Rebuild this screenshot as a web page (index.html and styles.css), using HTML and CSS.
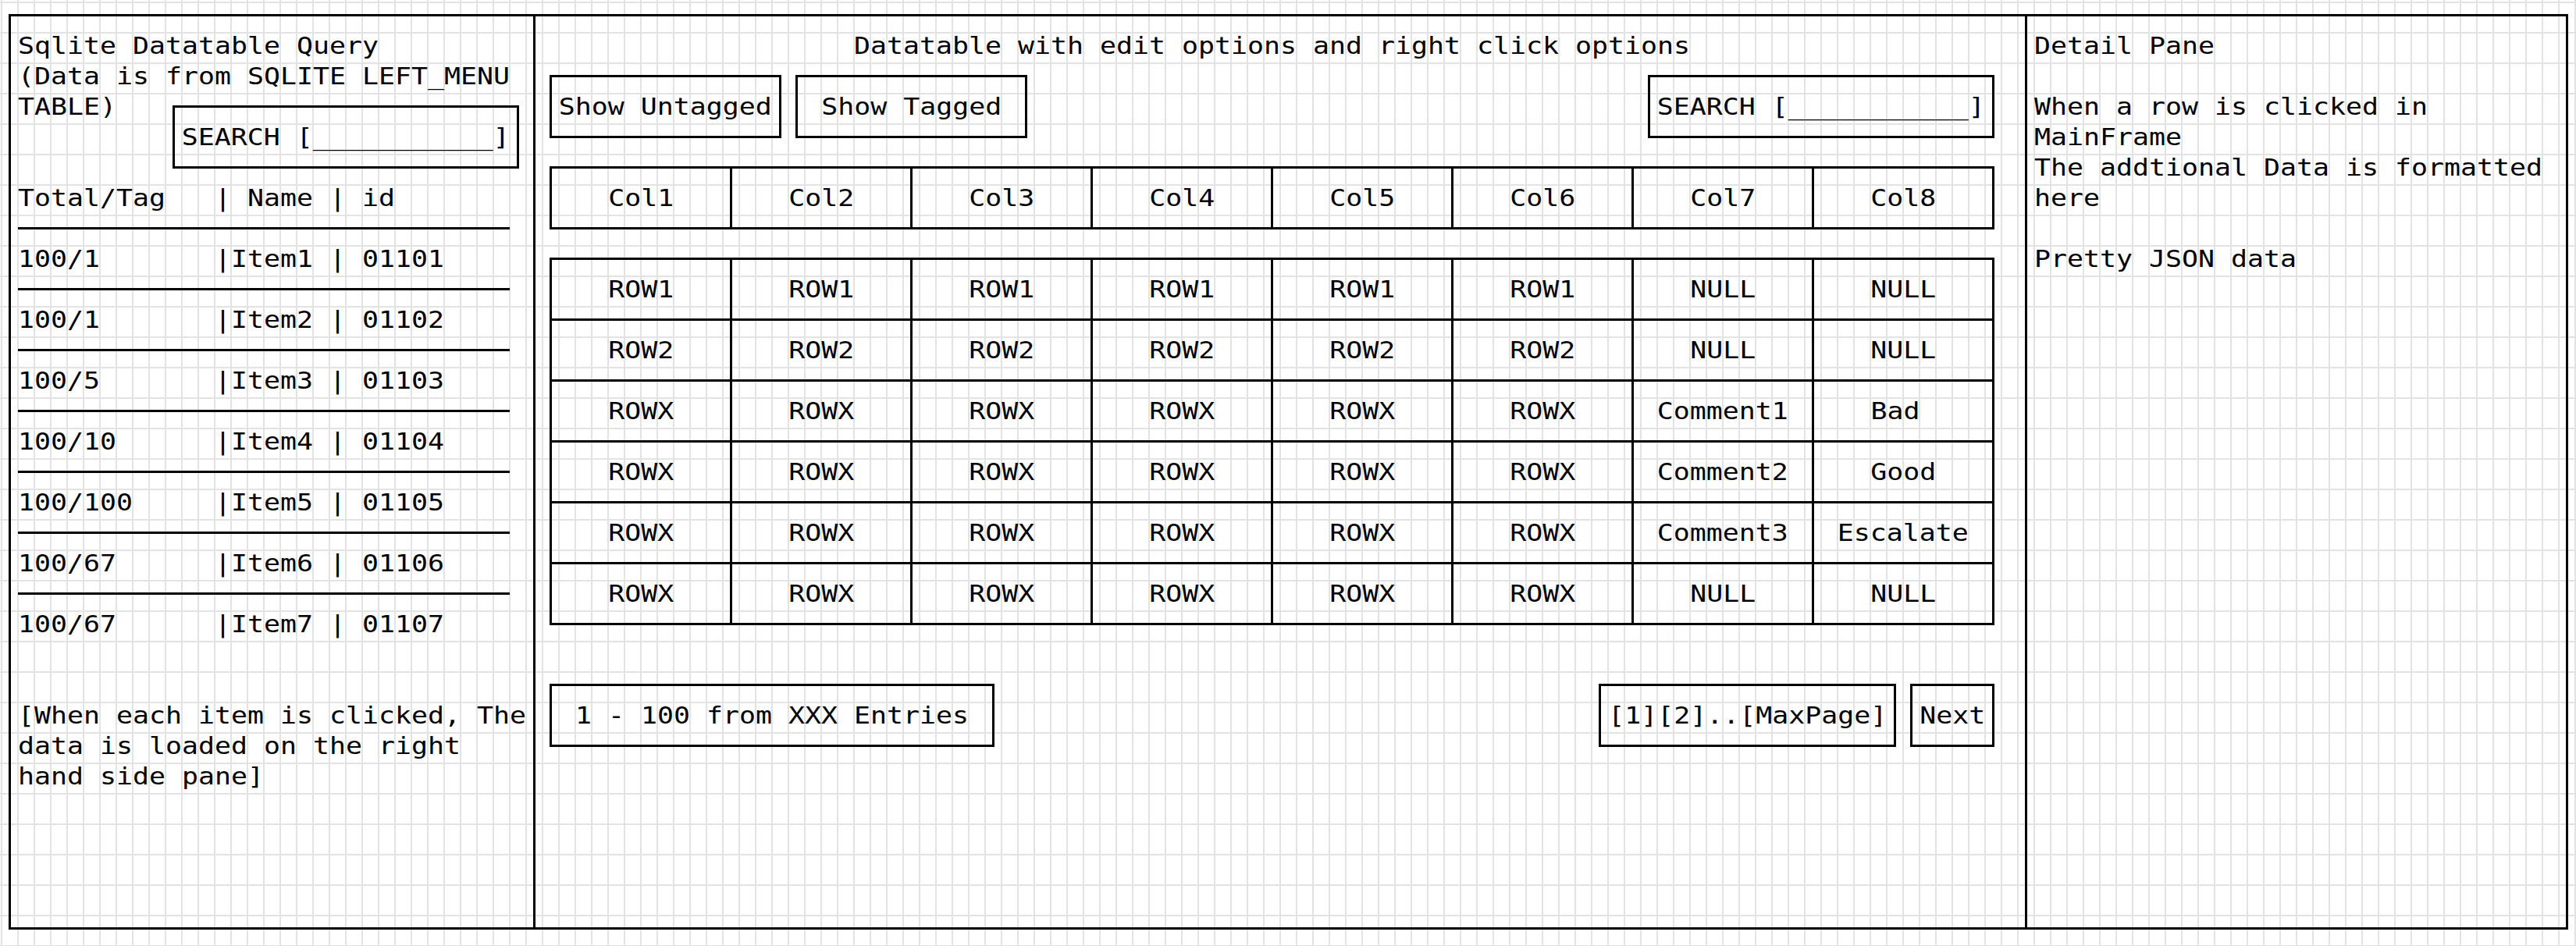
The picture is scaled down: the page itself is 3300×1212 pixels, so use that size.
FILE: index.html
```html
<!DOCTYPE html>
<html lang="en">
<head>
    <meta charset="UTF-8">
    <meta name="viewport" content="width=device-width, initial-scale=1.0">
    <title>Sqlite Datatable Query - Mockup</title>
    <link rel="stylesheet" href="styles.css">
</head>
<body>
    <div class="canvas">
        <div class="frame">

            <!-- Left menu pane -->
            <aside class="pane left-pane">
                <div class="line">Sqlite Datatable Query</div>
                <div class="line">(Data is from SQLITE LEFT_MENU</div>
                <div class="menu-head">
                    <div class="line">TABLE)</div>
                    <div class="box box-search menu-search"><span>SEARCH [___________]</span></div>
                </div>
                <div class="line">Total/Tag   | Name | id</div>
                <div class="rule"></div>
                <div class="line">100/1       |Item1 | 01101</div>
                <div class="rule"></div>
                <div class="line">100/1       |Item2 | 01102</div>
                <div class="rule"></div>
                <div class="line">100/5       |Item3 | 01103</div>
                <div class="rule"></div>
                <div class="line">100/10      |Item4 | 01104</div>
                <div class="rule"></div>
                <div class="line">100/100     |Item5 | 01105</div>
                <div class="rule"></div>
                <div class="line">100/67      |Item6 | 01106</div>
                <div class="rule"></div>
                <div class="line">100/67      |Item7 | 01107</div>

                <div class="note">
                    <div class="line">[When each item is clicked, The</div>
                    <div class="line">data is loaded on the right</div>
                    <div class="line">hand side pane]</div>
                </div>
            </aside>

            <!-- Main datatable -->
            <main class="pane table-pane">
                <div class="title">Datatable with edit options and right click options</div>

                <div class="toolbar">
                    <div class="box box-btn"><span>Show Untagged</span></div>
                    <div class="box box-btn"><span>Show Tagged</span></div>
                    <div class="box box-search push-right"><span>SEARCH [___________]</span></div>
                </div>

                <div class="grid-table">
                    <div class="cell"><span>Col1</span></div>
                    <div class="cell"><span>Col2</span></div>
                    <div class="cell"><span>Col3</span></div>
                    <div class="cell"><span>Col4</span></div>
                    <div class="cell"><span>Col5</span></div>
                    <div class="cell"><span>Col6</span></div>
                    <div class="cell"><span>Col7</span></div>
                    <div class="cell"><span>Col8</span></div>
                </div>

                <div class="grid-table">
                    <div class="cell"><span>ROW1</span></div>
                    <div class="cell"><span>ROW1</span></div>
                    <div class="cell"><span>ROW1</span></div>
                    <div class="cell"><span>ROW1</span></div>
                    <div class="cell"><span>ROW1</span></div>
                    <div class="cell"><span>ROW1</span></div>
                    <div class="cell"><span>NULL</span></div>
                    <div class="cell"><span>NULL</span></div>

                    <div class="cell"><span>ROW2</span></div>
                    <div class="cell"><span>ROW2</span></div>
                    <div class="cell"><span>ROW2</span></div>
                    <div class="cell"><span>ROW2</span></div>
                    <div class="cell"><span>ROW2</span></div>
                    <div class="cell"><span>ROW2</span></div>
                    <div class="cell"><span>NULL</span></div>
                    <div class="cell"><span>NULL</span></div>

                    <div class="cell"><span>ROWX</span></div>
                    <div class="cell"><span>ROWX</span></div>
                    <div class="cell"><span>ROWX</span></div>
                    <div class="cell"><span>ROWX</span></div>
                    <div class="cell"><span>ROWX</span></div>
                    <div class="cell"><span>ROWX</span></div>
                    <div class="cell"><span>Comment1</span></div>
                    <div class="cell odd"><span>Bad</span></div>

                    <div class="cell"><span>ROWX</span></div>
                    <div class="cell"><span>ROWX</span></div>
                    <div class="cell"><span>ROWX</span></div>
                    <div class="cell"><span>ROWX</span></div>
                    <div class="cell"><span>ROWX</span></div>
                    <div class="cell"><span>ROWX</span></div>
                    <div class="cell"><span>Comment2</span></div>
                    <div class="cell"><span>Good</span></div>

                    <div class="cell"><span>ROWX</span></div>
                    <div class="cell"><span>ROWX</span></div>
                    <div class="cell"><span>ROWX</span></div>
                    <div class="cell"><span>ROWX</span></div>
                    <div class="cell"><span>ROWX</span></div>
                    <div class="cell"><span>ROWX</span></div>
                    <div class="cell"><span>Comment3</span></div>
                    <div class="cell"><span>Escalate</span></div>

                    <div class="cell"><span>ROWX</span></div>
                    <div class="cell"><span>ROWX</span></div>
                    <div class="cell"><span>ROWX</span></div>
                    <div class="cell"><span>ROWX</span></div>
                    <div class="cell"><span>ROWX</span></div>
                    <div class="cell"><span>ROWX</span></div>
                    <div class="cell"><span>NULL</span></div>
                    <div class="cell"><span>NULL</span></div>
                </div>

                <div class="pager">
                    <div class="box box-entries"><span>1 - 100 from XXX Entries</span></div>
                    <div class="box box-pages push-right"><span>[1][2]..[MaxPage]</span></div>
                    <div class="box box-next"><span>Next</span></div>
                </div>
            </main>

            <!-- Detail pane -->
            <aside class="pane detail-pane">
                <div class="line">Detail Pane</div>
                <div class="line gap">When a row is clicked in</div>
                <div class="line">MainFrame</div>
                <div class="line">The addtional Data is formatted</div>
                <div class="line">here</div>
                <div class="line gap">Pretty JSON data</div>
            </aside>

        </div>
    </div>
</body>
</html>
```

FILE: styles.css
```css
/* one character cell of the ascii sketch = 21 x 39 px */
:root {
    --cw: 21px;
    --ch: 39px;
    --stroke: 3px;
    --half-v: 18px;   /* (cell height - stroke) / 2 */
    --half-h: 9px;    /* (cell width - stroke) / 2 */
    --sx: 1.12518;    /* stretch a 31px mono glyph to fill 21px */
}

body {
    margin: 0;
    width: 3300px;
    height: 1212px;
    overflow: hidden;
    background-color: #fff;
    background-image:
        linear-gradient(to right, #e3e3e3 2px, transparent 2px),
        linear-gradient(to bottom, #e3e3e3 2px, transparent 2px);
    background-size: var(--cw) var(--ch);
    background-position: 1px 2px;
    color: #000;
}

.canvas {
    padding-left: 2px;
    font-family: 'DejaVu Sans Mono', 'Liberation Mono', monospace;
    font-size: 31px;
    line-height: var(--ch);
}

.frame {
    display: flex;
    box-sizing: border-box;
    width: 3279px;
    height: 1173px;
    margin: var(--half-v) 0 0 var(--half-h);
    border: var(--stroke) solid #000;
}

.pane {
    display: flex;
    flex-direction: column;
    align-items: flex-start;
    box-sizing: border-box;
    padding: var(--half-v) var(--half-h);
}

.left-pane {
    width: 672px;
    border-right: var(--stroke) solid #000;
}

.table-pane {
    width: 1911px;
    padding-right: 30px;
    border-right: var(--stroke) solid #000;
}

.detail-pane {
    flex: 1;
}

/* text is stretched so every character fills one cell */
.line,
.title,
.box span,
.cell span {
    white-space: pre;
    transform: scaleX(var(--sx));
}

.line {
    height: var(--ch);
    transform-origin: 0 0;
}

.box span,
.cell span {
    display: inline-block;
}

/* a drawn box: borders run through the middle of the cells */
.box {
    border: var(--stroke) solid #000;
    padding: var(--half-v) var(--half-h);
    margin: var(--half-v) var(--half-h);
    text-align: center;
}

.box-next { width: calc(4 * var(--cw)); }
.box-btn { width: calc(13 * var(--cw)); }
.box-pages { width: calc(17 * var(--cw)); }
.box-search { width: calc(20 * var(--cw)); }
.box-entries { width: calc(26 * var(--cw)); }

.menu-head {
    display: flex;
    align-items: flex-start;
    align-self: stretch;
}

.menu-search {
    margin-left: auto;
}

.rule {
    width: calc(30 * var(--cw));
    border-top: var(--stroke) solid #000;
    margin: var(--half-v) 0;
}

.note {
    margin-top: calc(2 * var(--ch));
}

.title {
    align-self: stretch;
    text-align: center;
}

.toolbar,
.pager {
    display: flex;
    align-items: flex-start;
    align-self: stretch;
}

.pager {
    margin-top: var(--ch);
}

.push-right {
    margin-left: auto;
}

.grid-table {
    display: grid;
    grid-template-columns: repeat(8, 231px);
    margin: var(--half-v) 0 var(--half-v) var(--half-h);
    border-top: var(--stroke) solid #000;
    border-left: var(--stroke) solid #000;
}

.cell {
    box-sizing: border-box;
    padding: var(--half-v) 0;
    border-right: var(--stroke) solid #000;
    border-bottom: var(--stroke) solid #000;
    text-align: center;
}

.cell.odd {
    padding-right: var(--cw);
}

.gap {
    margin-top: var(--ch);
}
```
